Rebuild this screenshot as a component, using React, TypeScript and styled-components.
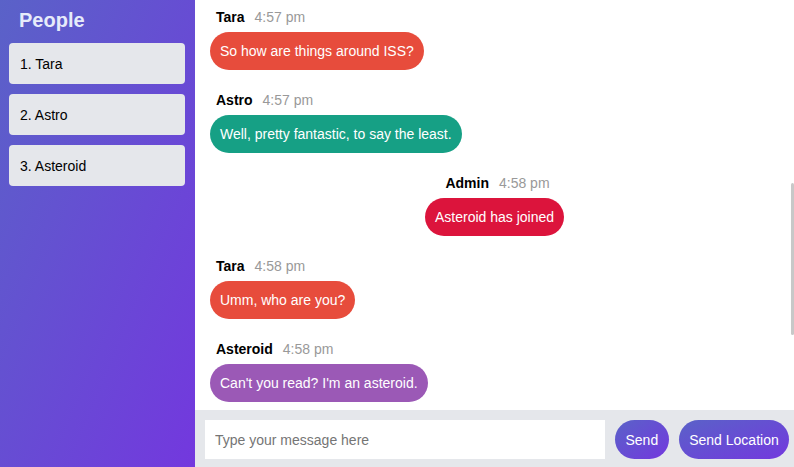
import React from "react";
import styled, { createGlobalStyle } from "styled-components";

const GlobalStyle = createGlobalStyle`
  html, body { margin: 0; padding: 0; height: 100%; overflow: hidden; }
  body { font-family: "Liberation Sans", Arial, sans-serif; font-size: 14px; }
  #root { height: 100%; }
  * { box-sizing: border-box; }
`;

const gradient = "linear-gradient(to bottom right, #5a62c8, #7338de)";

const Layout = styled.div`
  display: flex;
  height: 467px;
  width: 794px;
  overflow: hidden;
`;

const Sidebar = styled.aside`
  width: 195px;
  flex-shrink: 0;
  background: ${gradient};
  padding: 8px 10px 9px 9px;
  display: flex;
  flex-direction: column;
  gap: 10px;
`;

const Heading = styled.h2`
  margin: 0 0 0 10px;
  font-size: 20px;
  line-height: 25px;
  font-weight: bold;
  color: #e6ebfa;
`;

const Person = styled.div`
  background: #e5e7eb;
  border-radius: 4px;
  height: 41px;
  padding: 0 11px;
  display: flex;
  align-items: center;
  color: #000;
  font-size: 14px;
`;

const Main = styled.main`
  flex: 1;
  display: flex;
  flex-direction: column;
  min-width: 0;
  position: relative;
`;

const Messages = styled.div`
  flex: 1;
  overflow: hidden;
  padding: 8px 15px 0 15px;
  background: #fff;
`;

const ScrollThumb = styled.div`
  position: absolute;
  right: 0;
  top: 183px;
  width: 3px;
  height: 152px;
  border-radius: 2px;
  background: #c8c8c8;
`;

const Message = styled.div<{ $center?: boolean }>`
  display: flex;
  flex-direction: column;
  align-items: ${(p) => (p.$center ? "center" : "flex-start")};
  margin-bottom: 21px;
  &:last-child { margin-bottom: 0; }
`;

const Meta = styled.div`
  display: flex;
  gap: 10px;
  height: 18px;
  align-items: center;
  margin: 0 0 6px 6px;
  font-size: 14px;
`;

const Name = styled.span`
  font-weight: bold;
  color: #000;
`;

const Time = styled.span`
  color: #999;
`;

const Bubble = styled.div<{ $color: string }>`
  background: ${(p) => p.$color};
  color: #fff;
  border-radius: 19px;
  padding: 10px 10px;
  line-height: 18px;
  font-size: 14px;
`;

const Footer = styled.form`
  height: 57px;
  flex-shrink: 0;
  background: #e5e7eb;
  display: flex;
  align-items: flex-start;
  gap: 10px;
  padding: 10px 0 8px 10px;
`;

const Input = styled.input`
  width: 400px;
  height: 39px;
  border: none;
  outline: none;
  padding: 0 10px;
  font-family: "Liberation Sans", Arial, sans-serif;
  font-size: 14px;
  background: #fff;
  &::placeholder { color: #757575; }
`;

const Button = styled.button`
  height: 39px;
  border: none;
  border-radius: 20px;
  padding: 0 10.5px;
  background: ${gradient};
  color: #fff;
  font-family: "Liberation Sans", Arial, sans-serif;
  font-size: 14px;
  white-space: nowrap;
  flex-shrink: 0;
  cursor: pointer;
`;

type Msg = { name: string; time: string; text: string; color: string; center?: boolean };

const COLORS = {
  Tara: "#e74c3c",
  Astro: "#16a085",
  Admin: "#dc143c",
  Asteroid: "#9b59b6",
};

const messages: Msg[] = [
  { name: "Tara", time: "4:57 pm", text: "So how are things around ISS?", color: COLORS.Tara },
  { name: "Astro", time: "4:57 pm", text: "Well, pretty fantastic, to say the least.", color: COLORS.Astro },
  { name: "Admin", time: "4:58 pm", text: "Asteroid has joined", color: COLORS.Admin, center: true },
  { name: "Tara", time: "4:58 pm", text: "Umm, who are you?", color: COLORS.Tara },
  { name: "Asteroid", time: "4:58 pm", text: "Can't you read? I'm an asteroid.", color: COLORS.Asteroid },
];

const people = ["Tara", "Astro", "Asteroid"];

export default function App() {
  return (
    <>
      <GlobalStyle />
      <Layout>
        <Sidebar>
          <Heading>People</Heading>
          {people.map((p, i) => (
            <Person key={p}>
              {i + 1}. {p}
            </Person>
          ))}
        </Sidebar>
        <Main>
          <Messages>
            {messages.map((m, i) => (
              <Message key={i} $center={m.center}>
                <Meta>
                  <Name>{m.name}</Name>
                  <Time>{m.time}</Time>
                </Meta>
                <Bubble $color={m.color}>{m.text}</Bubble>
              </Message>
            ))}
          </Messages>
          <ScrollThumb />
          <Footer onSubmit={(e) => e.preventDefault()}>
            <Input placeholder="Type your message here" />
            <Button type="submit">Send</Button>
            <Button type="button">Send Location</Button>
          </Footer>
        </Main>
      </Layout>
    </>
  );
}
